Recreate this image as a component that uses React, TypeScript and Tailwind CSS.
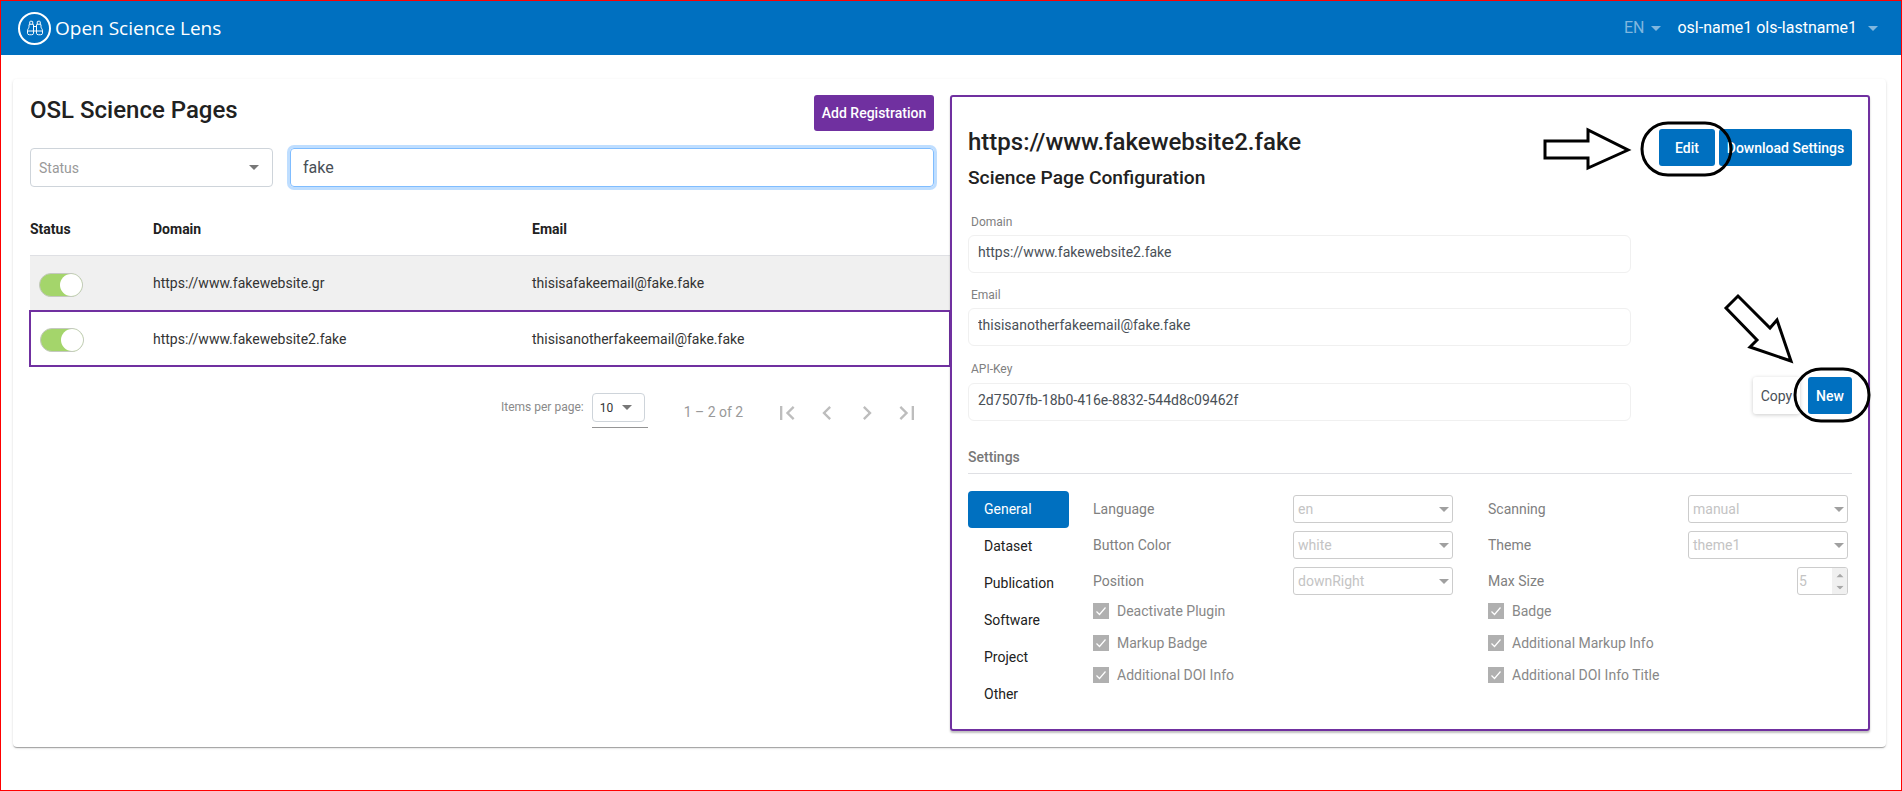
import { Binoculars } from "lucide-react";
import { MdChevronLeft, MdChevronRight, MdFirstPage, MdLastPage } from "react-icons/md";

const tabs = ["General", "Dataset", "Publication", "Software", "Project", "Other"];

function Caret({ className }: { className: string }) {
  return (
    <svg width="10" height="5" viewBox="0 0 10 5" className={className}>
      <path d="M0 0h10L5 5z" fill="currentColor" />
    </svg>
  );
}

function Toggle({ className }: { className: string }) {
  return (
    <div className={`mt-[3px] flex h-6 w-11 justify-end rounded-full border border-[#c4c8c0] bg-[#a4d56b] ${className}`}>
      <div className="size-[22px] rounded-full bg-white" />
    </div>
  );
}

function FormField({ label, value, labelClass, top }: { label: string; value: string; labelClass: string; top: string }) {
  return (
    <div className={top}>
      <div className={`pl-[3px] text-xs leading-4 text-[#808080] ${labelClass}`}>{label}</div>
      <input
        readOnly
        value={value}
        className="h-[38px] w-[663px] rounded-md border border-[#f0f0f0] px-[9px] pb-1 text-sm text-[#495057] outline-none"
      />
    </div>
  );
}

function SelectRow({ label, value }: { label: string; value: string }) {
  return (
    <div className="flex h-7 items-center justify-between">
      <span className="text-sm text-[#808080]">{label}</span>
      <div className="flex h-7 w-40 items-center justify-between rounded-[3px] border border-[#ccc] pr-[3px] pl-1 text-sm text-[#c4c4c4]">
        {value}
        <Caret className="text-[#a0a0a0]" />
      </div>
    </div>
  );
}

function CheckRow({ label }: { label: string }) {
  return (
    <div className="flex h-4 items-center gap-2 text-sm text-[#888]">
      <div className="flex size-4 items-center justify-center bg-[#b0b0b0]">
        <svg width="12" height="12" viewBox="0 0 12 12" fill="none">
          <path d="M1.5 6.5l3 3 6-7" stroke="#fff" strokeWidth="1.2" />
        </svg>
      </div>
      {label}
    </div>
  );
}

export default function App() {
  return (
    <div className="relative flex h-[791px] flex-col overflow-hidden border border-[#f00] bg-white font-[Roboto,sans-serif]">
      <header className="flex h-[54px] shrink-0 items-center bg-[#0070c0] pr-[23px] pl-[17px] text-white">
        <div className="flex size-[33px] items-center justify-center rounded-full border-2 border-white">
          <Binoculars size={18} strokeWidth={1.3} />
        </div>
        <span className="ml-1 font-['Open_Sans',sans-serif] text-[19px]">Open Science Lens</span>
        <div className="ml-auto flex items-center text-base">
          <span className="text-[#80b7df]">EN</span>
          <Caret className="ml-[7px] text-[#80b7df]" />
          <span className="ml-4">osl-name1 ols-lastname1</span>
          <Caret className="ml-[11px] text-[#80b7df]" />
        </div>
      </header>

      <main className="px-3 pt-6">
        <div className="flex h-[668px] w-[1873px] rounded-[4px] pt-4 pr-4 pl-[17px] shadow-[0_2px_1px_-1px_rgba(0,0,0,0.2),0_1px_1px_0_rgba(0,0,0,0.14),0_1px_3px_0_rgba(0,0,0,0.12)]">
          <section className="w-[920px] shrink-0">
            <div className="flex h-9 items-center justify-between pr-4">
              <h1 className="mb-[6px] text-2xl font-medium text-[#212121]">OSL Science Pages</h1>
              <button className="h-9 w-[120px] rounded-[3px] bg-[#7030a0] text-sm font-medium text-white">
                Add Registration
              </button>
            </div>

            <div className="mt-[17px] flex gap-[17px] pr-4">
              <div className="flex h-[39px] w-[243px] items-center justify-between rounded-[4px] border border-[#ced4da] pr-[13px] pl-2 text-sm text-[#999]">
                Status
                <Caret className="text-[#777]" />
              </div>
              <input
                readOnly
                value="fake"
                className="h-[39px] flex-1 rounded-[4px] border border-[#80bdff] px-3 text-base text-[#495057] shadow-[0_0_0_3px_rgba(0,123,255,0.25)] outline-none"
              />
            </div>

            <div className="mt-[18px] grid h-[51px] grid-cols-[123px_379px_1fr] items-center border-b border-[#dfe0e4] pb-[3px] text-sm font-bold text-[#212121]">
              <span>Status</span>
              <span>Domain</span>
              <span>Email</span>
            </div>
            <div className="grid h-[55px] grid-cols-[123px_379px_1fr] items-center bg-[#f0f0f0] text-sm text-[#333]">
              <Toggle className="ml-[9px]" />
              <span className="mb-[2px]">https://www.fakewebsite.gr</span>
              <span className="mb-[2px]">thisisafakeemail@fake.fake</span>
            </div>
            <div className="grid h-[55px] grid-cols-[123px_379px_1fr] items-center text-sm text-[#333] outline-2 -outline-offset-1 outline-[#7030a0]">
              <Toggle className="ml-[10px]" />
              <span>https://www.fakewebsite2.fake</span>
              <span>thisisanotherfakeemail@fake.fake</span>
            </div>

            <div className="mt-[27px] flex pl-[471px]">
              <span className="mt-[6px] text-xs leading-4 text-[#8a8a8a]">Items per page:</span>
              <div className="ml-2 h-[35px] w-14 border-b border-[#949494]">
                <div className="flex h-[29px] w-[53px] items-center justify-between rounded-[4px] border border-[#ced4da] pr-3 pl-[7px] text-xs text-[#333]">
                  10
                  <Caret className="text-[#777]" />
                </div>
              </div>
              <span className="mt-[9px] ml-9 text-sm text-[#999]">1 – 2 of 2</span>
              <div className="mt-0 ml-[24px] flex text-[#bdbdbd]">
                {[MdFirstPage, MdChevronLeft, MdChevronRight, MdLastPage].map((Icon, i) => (
                  <div key={i} className="flex h-10 w-10 items-center justify-center">
                    <Icon size={28} />
                  </div>
                ))}
              </div>
            </div>
          </section>

          <section className="relative h-[636px] w-[920px] shrink-0 rounded-[3px] border-2 border-[#7030a0] px-4 shadow-[0_2px_2px_rgba(0,0,0,0.25)]">
            <div className="flex justify-between">
              <div className="pt-[31px]">
                <h2 className="text-2xl leading-[29px] font-medium text-[#212121]">https://www.fakewebsite2.fake</h2>
                <h3 className="mt-[9px] text-[19.2px] leading-6 font-medium text-[#212121]">Science Page Configuration</h3>
              </div>
              <div className="flex gap-1 pt-8">
                <button className="h-[37px] w-14 rounded-[3px] bg-[#0070c0] text-sm font-medium text-white">Edit</button>
                <button className="h-[37px] w-[133px] rounded-[3px] bg-[#0070c0] text-sm font-medium text-white">
                  Download Settings
                </button>
              </div>
            </div>

            <FormField label="Domain" value="https://www.fakewebsite2.fake" labelClass="mb-[5px]" top="mt-6" />
            <FormField label="Email" value="thisisanotherfakeemail@fake.fake" labelClass="mb-[5px]" top="mt-[14px]" />
            <div className="mt-[15px] flex justify-between">
              <FormField label="API-Key" value="2d7507fb-18b0-416e-8832-544d8c09462f" labelClass="mb-[6px]" top="" />
              <div className="flex gap-2 pt-4">
                <button className="h-[37px] w-[47px] rounded-[3px] text-sm text-[#495057] shadow-[0_1px_4px_rgba(0,0,0,0.2)]">Copy</button>
                <button className="h-[37px] w-11 rounded-[3px] bg-[#0070c0] text-sm font-medium text-white">New</button>
              </div>
            </div>

            <div className="mt-[26px] border-b border-[#dfe0e4] pb-[6px] text-sm leading-5 font-medium text-[#777]">Settings</div>

            <div className="mt-[17px] flex">
              <nav className="w-[101px]">
                {tabs.map((tab, i) => (
                  <div
                    key={tab}
                    className={`flex h-[37px] items-center rounded-[4px] pb-px pl-4 text-sm ${
                      i === 0 ? "bg-[#0070c0] text-white" : "text-[#212121]"
                    }`}
                  >
                    {tab}
                  </div>
                ))}
              </nav>
              <div className="ml-6 grid w-[755px] grid-cols-[360px_360px] gap-x-[35px] pt-1">
                <div>
                  <div className="flex flex-col gap-2">
                    <SelectRow label="Language" value="en" />
                    <SelectRow label="Button Color" value="white" />
                    <SelectRow label="Position" value="downRight" />
                  </div>
                  <div className="mt-2 flex flex-col gap-4">
                    <CheckRow label="Deactivate Plugin" />
                    <CheckRow label="Markup Badge" />
                    <CheckRow label="Additional DOI Info" />
                  </div>
                </div>
                <div>
                  <div className="flex flex-col gap-2">
                    <SelectRow label="Scanning" value="manual" />
                    <SelectRow label="Theme" value="theme1" />
                    <div className="flex h-7 items-center justify-between">
                      <span className="text-sm text-[#808080]">Max Size</span>
                      <div className="flex h-7 w-[51px] items-center justify-between overflow-hidden rounded-[3px] border border-[#ccc] text-sm text-[#c4c4c4]">
                        <span className="pl-px">5</span>
                        <div className="flex h-full w-[15px] flex-col items-center justify-center gap-[7px] bg-[#f0f0f0] text-[#a8a8a8]">
                          <Caret className="rotate-180 scale-75" />
                          <Caret className="scale-75" />
                        </div>
                      </div>
                    </div>
                  </div>
                  <div className="mt-2 flex flex-col gap-4">
                    <CheckRow label="Badge" />
                    <CheckRow label="Additional Markup Info" />
                    <CheckRow label="Additional DOI Info Title" />
                  </div>
                </div>
              </div>
            </div>
          </section>
        </div>
      </main>

      {/* hand-drawn annotations on top of the screenshot */}
      <svg
        width="1902"
        height="791"
        viewBox="0 0 1902 791"
        className="pointer-events-none absolute top-[-1px] left-[-1px]"
        fill="none"
        stroke="#000"
      >
        <polygon points="1545,141 1588,141 1588,130 1628,150 1588,168 1588,158 1545,158" fill="#fff" strokeWidth="3" />
        <rect x="1642" y="123" width="89" height="52" rx="26" strokeWidth="3" />
        <polygon points="1726,308 1738,296 1770,328 1777,320 1791,361 1750,347 1757,340" fill="#fff" strokeWidth="3" />
        <rect x="1795" y="369" width="74" height="52" rx="26" strokeWidth="3" />
      </svg>
    </div>
  );
}
